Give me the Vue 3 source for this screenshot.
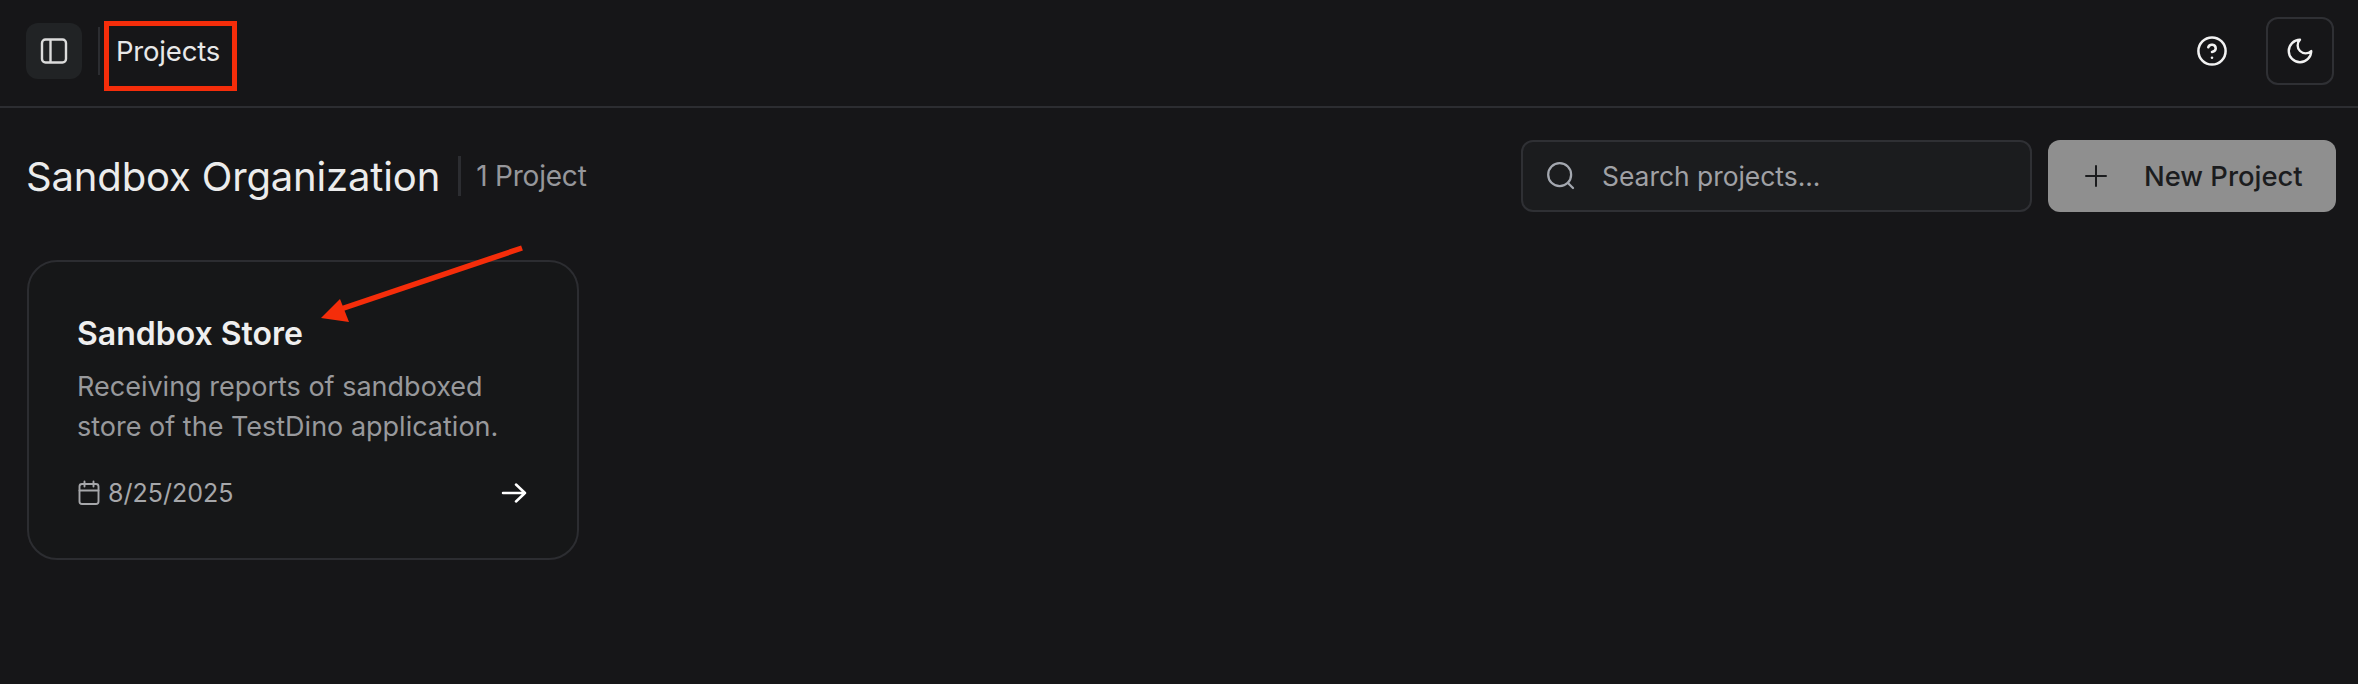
<template>
  <div class="page">
    <header class="topbar">
      <div class="topbar-left">
        <button class="side-btn">
          <svg width="28" height="28" viewBox="0 0 28 28" fill="none" stroke="currentColor" stroke-width="2.4" stroke-linejoin="round">
            <rect x="2" y="2.5" width="24" height="23" rx="3.5" />
            <path d="M10.5 2.5v23" />
          </svg>
        </button>
        <span class="top-sep"></span>
        <span class="crumb">Projects</span>
      </div>
      <div class="topbar-right">
        <svg class="help" width="32" height="32" viewBox="0 0 24 24" fill="none" stroke="currentColor" stroke-width="1.9" stroke-linecap="round" stroke-linejoin="round">
          <circle cx="12" cy="12" r="10.2" />
          <path d="M9.2 9.2a2.9 2.9 0 0 1 5.6 1c0 1.9-2.8 2.6-2.8 2.6" />
          <path d="M12 17h.01" />
        </svg>
        <button class="theme-btn">
          <svg width="30" height="30" viewBox="0 0 24 24" fill="none" stroke="currentColor" stroke-width="1.9" stroke-linecap="round" stroke-linejoin="round">
            <path d="M12 3a6 6 0 0 0 9 9 9 9 0 1 1-9-9Z" />
          </svg>
        </button>
      </div>
    </header>

    <section class="heading">
      <div class="heading-left">
        <h1>Sandbox Organization</h1>
        <span class="head-sep"></span>
        <span class="count">1 Project</span>
      </div>
      <div class="heading-right">
        <div class="search">
          <svg width="32" height="32" viewBox="0 0 24 24" fill="none" stroke="#a4a8b0" stroke-width="1.7" stroke-linecap="round">
            <circle cx="11" cy="11" r="8.6" />
            <path d="m21 21-3.8-3.8" />
          </svg>
          <span>Search projects...</span>
        </div>
        <button class="new-btn">
          <svg width="24" height="24" viewBox="0 0 24 24" fill="none" stroke="currentColor" stroke-width="2" stroke-linecap="round">
            <path d="M12 2v20M2 12h20" />
          </svg>
          <span>New Project</span>
        </button>
      </div>
    </section>

    <article class="card">
      <h2>Sandbox Store</h2>
      <p>Receiving reports of sandboxed<br />store of the TestDino application.</p>
      <div class="card-foot">
        <span class="date">
          <svg width="24" height="26" viewBox="0 0 24 26" fill="none" stroke="currentColor" stroke-width="1.9" stroke-linecap="round" stroke-linejoin="round">
            <rect x="2.5" y="4" width="19" height="20" rx="2.5" />
            <path d="M7.5 1.5v5M16.5 1.5v5M2.5 10.5h19" />
          </svg>
          8/25/2025
        </span>
        <svg width="28" height="24" viewBox="0 0 28 24" fill="none" stroke="#fff" stroke-width="2.5" stroke-linecap="round" stroke-linejoin="round">
          <path d="M3 12h22M16 3.5l9 8.5-9 8.5" />
        </svg>
      </div>
    </article>

    <!-- annotations drawn over the screenshot -->
    <div class="red-box"></div>
    <svg class="red-arrow" width="2358" height="684" viewBox="0 0 2358 684" fill="none">
      <path d="M522 248 335 311" stroke="#f52d0a" stroke-width="5.5" />
      <path d="M321 318 340 299 349 322Z" fill="#f52d0a" />
    </svg>
  </div>
</template>

<script setup>
</script>

<style>
html,
body {
  background: #161618;
}
</style>

<style scoped>
.page {
  position: relative;
  width: 2358px;
  height: 684px;
  overflow: hidden;
  background: #161618;
  color: #eeeeee;
  font-family: Inter, "Liberation Sans", sans-serif;
}
button {
  font-family: inherit;
  border: 0;
  padding: 0;
}

.topbar {
  height: 108px;
  box-sizing: border-box;
  border-bottom: 2px solid #2c2d31;
  display: flex;
  justify-content: space-between;
  align-items: center;
  padding: 0 24px 4px 26px;
}
.topbar-left {
  display: flex;
  align-items: center;
}
.side-btn {
  width: 56px;
  height: 56px;
  border-radius: 12px;
  background: #212325;
  color: #dcdcdc;
  display: flex;
  align-items: center;
  justify-content: center;
}
.top-sep {
  width: 2px;
  height: 48px;
  background: #2c2d31;
  margin: 0 16px 0 16px;
}
.crumb {
  font-size: 27.5px;
  color: #e8e8e8;
  letter-spacing: -0.2px;
}
.topbar-right {
  display: flex;
  align-items: center;
  gap: 38px;
}
.help {
  color: #f2f2f2;
}
.theme-btn {
  width: 68px;
  height: 68px;
  box-sizing: border-box;
  border: 2px solid #2f3034;
  border-radius: 12px;
  background: transparent;
  color: #f2f2f2;
  display: flex;
  align-items: center;
  justify-content: center;
}

.heading {
  display: flex;
  justify-content: space-between;
  align-items: center;
  padding: 32px 22px 0 26px;
}
.heading-left {
  display: flex;
  align-items: center;
}
h1 {
  margin: 0;
  font-size: 40px;
  font-weight: 400;
  color: #ececec;
  letter-spacing: -0.15px;
}
.head-sep {
  width: 3px;
  height: 40px;
  background: #2c2d31;
  margin: 0 15px 0 18px;
}
.count {
  font-size: 28px;
  color: #96979b;
  letter-spacing: -0.2px;
}
.heading-right {
  display: flex;
  gap: 16px;
}
.search {
  width: 511px;
  height: 72px;
  box-sizing: border-box;
  border: 2px solid #2f3034;
  border-radius: 12px;
  background: #1b1c1e;
  display: flex;
  align-items: center;
  gap: 25px;
  padding-left: 22px;
  font-size: 26.4px;
  color: #a0a1a5;
}
.new-btn {
  width: 288px;
  height: 72px;
  border-radius: 12px;
  background: #8f8f8f;
  color: #1b1c1e;
  display: flex;
  align-items: center;
  gap: 36px;
  padding-left: 36px;
  box-sizing: border-box;
  font-size: 27.4px;
  font-weight: 500;
}

.card {
  width: 552px;
  height: 300px;
  box-sizing: border-box;
  margin: 48px 0 0 27px;
  padding: 52px 49px 0 48px;
  border: 2px solid #2c2d31;
  border-radius: 30px;
  background: #161718;
}
h2 {
  margin: 0;
  font-size: 32px;
  line-height: 40px;
  font-weight: 600;
  color: #efefef;
}
.card p {
  margin: 13px 0 0;
  font-size: 27px;
  line-height: 40px;
  color: #98999c;
}
.card-foot {
  margin-top: 31px;
  display: flex;
  justify-content: space-between;
  align-items: center;
}
.date {
  display: flex;
  align-items: center;
  gap: 7px;
  font-size: 25px;
  color: #a6a7aa;
}

.red-box {
  position: absolute;
  left: 104px;
  top: 21px;
  width: 133px;
  height: 70px;
  box-sizing: border-box;
  border: 5px solid #f52d0a;
}
.red-arrow {
  position: absolute;
  left: 0;
  top: 0;
  pointer-events: none;
}
</style>
